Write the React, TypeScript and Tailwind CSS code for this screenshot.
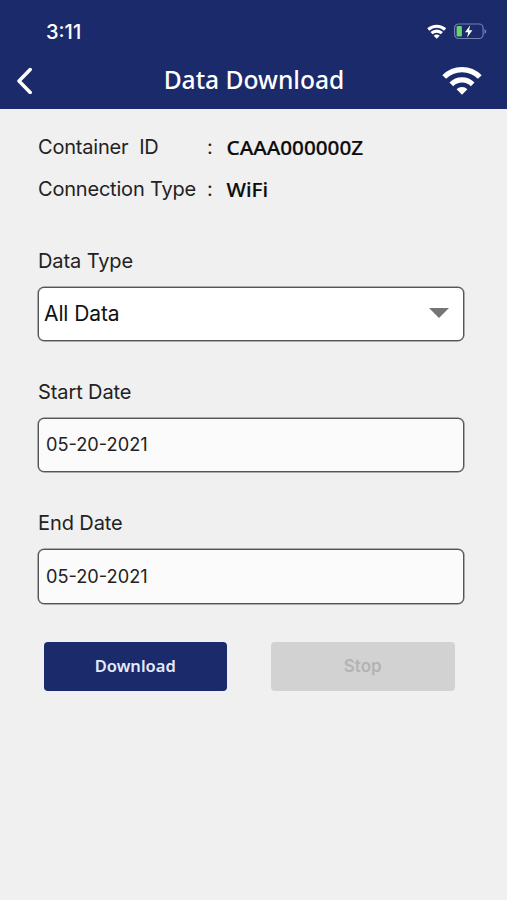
import { clsx } from "clsx";

function WifiStatusIcon() {
  return (
    <svg width="20" height="15" viewBox="0 0 20 15" fill="none" stroke="#fff" strokeWidth="3.1">
      <path d="M1.3 5.5a12.4 12.4 0 0 1 16.8 0" />
      <path d="M4.5 9.2a7.5 7.5 0 0 1 10.4 0" />
      <path d="M9.7 14.8 6.7 11.8a4.2 4.2 0 0 1 6 0z" fill="#fff" stroke="none" />
    </svg>
  );
}

function BatteryIcon() {
  return (
    <svg width="34" height="17" viewBox="0 0 34 17" fill="none">
      <rect x="0.6" y="1" width="28.5" height="14.5" rx="4" stroke="#7480b0" strokeWidth="1.2" />
      <path d="M30.5 6v5c1-.4 1.7-1.3 1.7-2.5S31.5 6.4 30.5 6z" fill="#7480b0" />
      <rect x="2.6" y="3" width="5.3" height="10.5" rx="1" fill="#66d66c" />
      <path d="M16.2 2.3 11 9.2h3.2l-1.1 5.3 5.3-7.3h-3.3z" fill="#fff" />
    </svg>
  );
}

function WifiIcon() {
  return (
    <svg width="40" height="30" viewBox="0 0 40 30" fill="none" stroke="#fff" strokeWidth="5.2">
      <path d="M2.2 12a25 25 0 0 1 35.6 0" />
      <path d="M9.3 19.3a15.2 15.2 0 0 1 21.4 0" />
      <path d="M20 29.8 14.6 24.3a7.4 7.4 0 0 1 10.8 0z" fill="#fff" stroke="none" />
    </svg>
  );
}

function InfoRow({ label, value }: { label: string; value: string }) {
  return (
    <div className="flex h-[42px] items-center text-[20px] leading-[24px]">
      <span className="w-[169px] tracking-[-0.2px] whitespace-pre">{label}</span>
      <span className="w-[19.5px]">:</span>
      <span className="font-['Noto_Sans'] text-[20.7px] font-medium text-[#0c0c0c] [-webkit-text-stroke:0.2px_#0c0c0c]">
        {value}
      </span>
    </div>
  );
}

function Field({ label, value, select }: { label: string; value: string; select?: boolean }) {
  return (
    <div className="h-[131.3px]">
      <div className="h-[38px] text-[20px] leading-[24px] tracking-[-0.1px]">{label}</div>
      <div
        className={clsx(
          "flex h-[54.5px] w-[426px] items-center justify-between rounded-[6px] border border-[#555] shadow-[0_0_0_0.5px_#666]",
          select
            ? "bg-white pr-[14px] pl-[5px] text-[21px] tracking-[-0.1px] text-[#111]"
            : "bg-[#fbfbfb] pl-[7px] text-[18.2px]"
        )}
      >
        <span>{value}</span>
        {select && (
          <svg className="-mt-px" width="20" height="10" viewBox="0 0 20 10">
            <path d="M0 0h20L10 10z" fill="#757575" />
          </svg>
        )}
      </div>
    </div>
  );
}

export default function App() {
  return (
    <div className="h-[900px] w-[507px] overflow-hidden bg-[#f0f0f0] font-['Inter',sans-serif] text-[#222]">
      <header className="h-[108.5px] bg-[#1b2a6b] text-white">
        <div className="flex h-[52px] items-center justify-between pt-[11px] pr-[19px] pl-[46px]">
          <span className="text-[20px] leading-[24px] font-medium">3:11</span>
          <div className="flex items-center gap-[7px]">
            <WifiStatusIcon />
            <BatteryIcon />
          </div>
        </div>
        <div className="flex h-[56px] items-center justify-between pr-[25px] pl-[16px]">
          <svg width="50" height="28" viewBox="0 0 50 28" fill="none" stroke="#fff" strokeWidth="3.5">
            <path d="M14.2 3.5 3 15l11.2 11.5" strokeLinecap="round" strokeLinejoin="round" />
          </svg>
          <h1 className="font-['Noto_Sans'] text-[24.6px] font-medium">Data Download</h1>
          <WifiIcon />
        </div>
      </header>
      <main className="pt-[17.5px] pl-[38px]">
        <InfoRow label="Container  ID" value="CAAA000000Z" />
        <InfoRow label="Connection Type" value="WiFi" />
        <div className="pt-[38.5px]">
          <Field label="Data Type" value="All Data" select />
          <Field label="Start Date" value="05-20-2021" />
          <Field label="End Date" value="05-20-2021" />
        </div>
        <div className="flex gap-[44px] pl-[5.5px] text-[16.5px] font-semibold">
          <button className="h-[49px] w-[183.5px] rounded-[4px] bg-[#1b2a6b] pb-px font-['Noto_Sans'] text-[#e4e9fb]">
            Download
          </button>
          <button disabled className="h-[49px] w-[183.5px] rounded-[4px] bg-[#d2d2d2] pb-px text-[17px] text-[#b3b3b3]">
            Stop
          </button>
        </div>
      </main>
    </div>
  );
}
